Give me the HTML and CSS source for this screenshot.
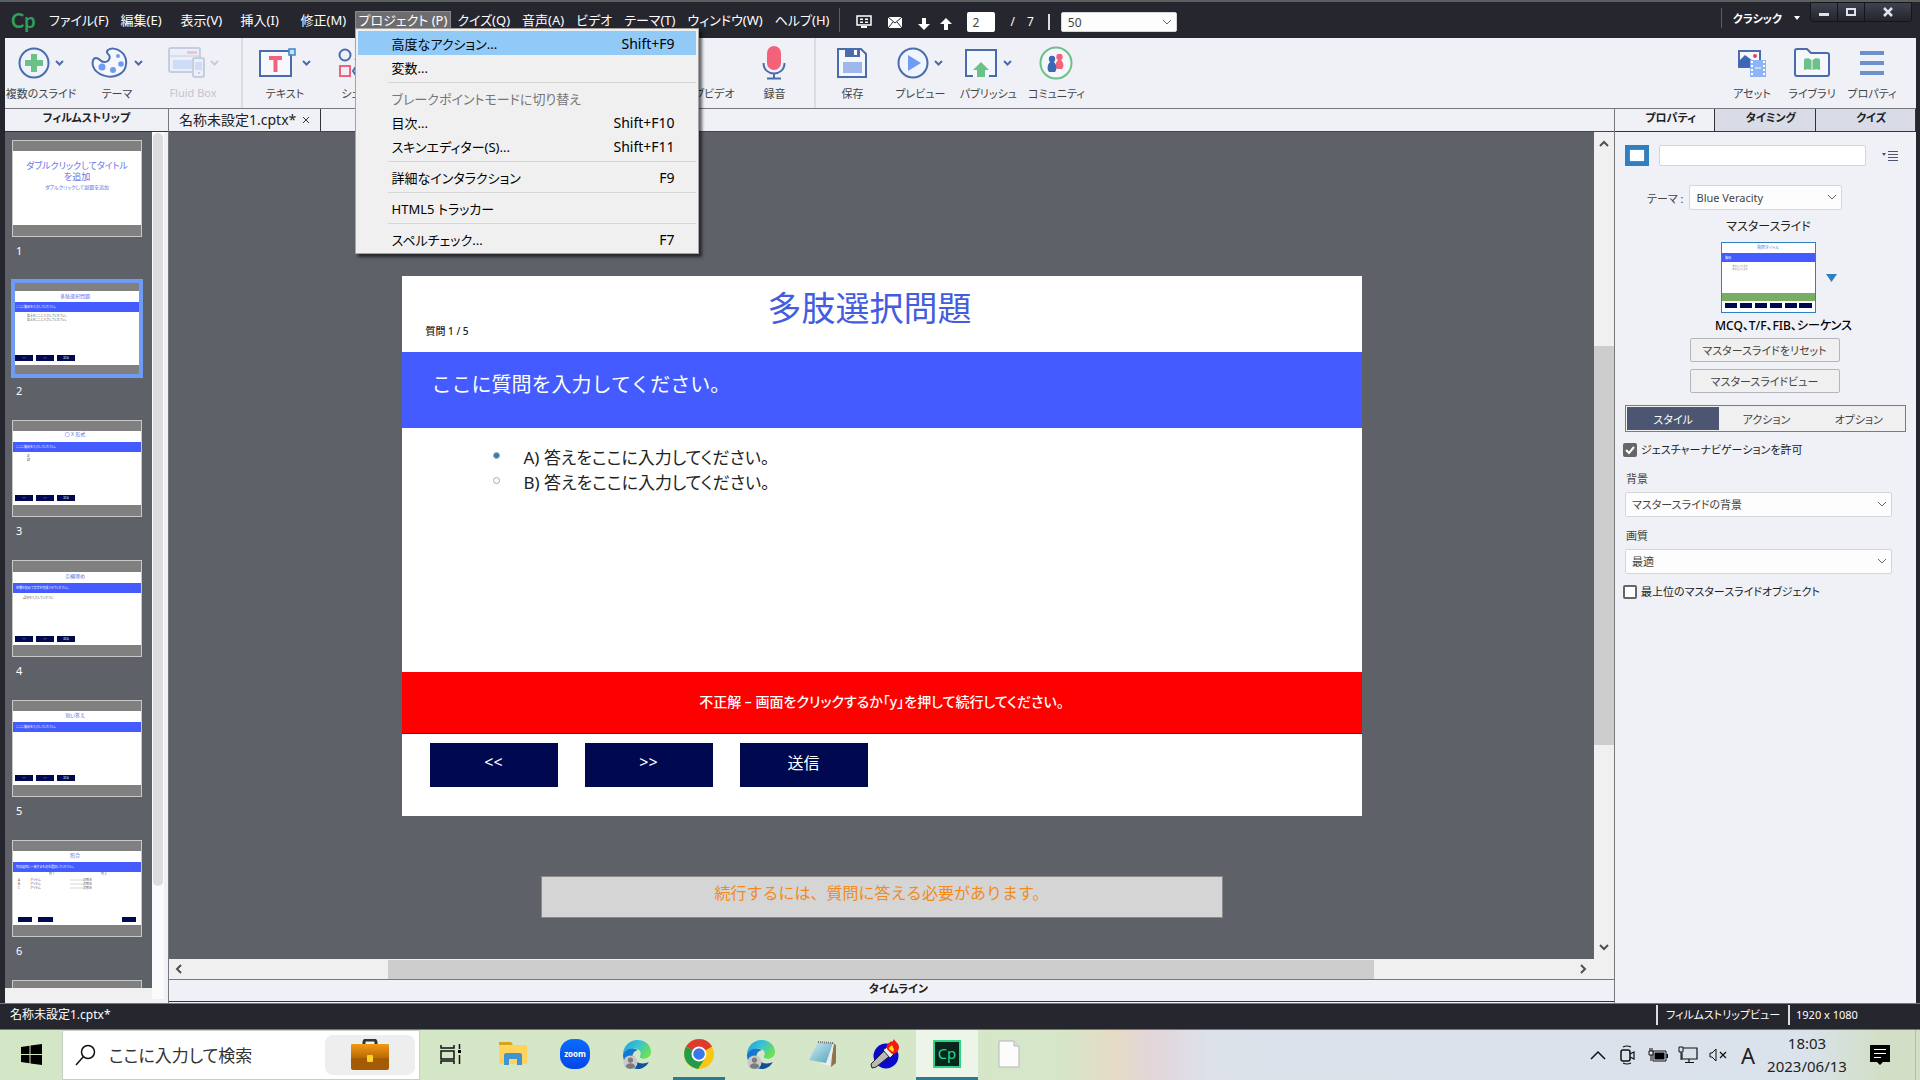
FILE: index.html
```html
<!DOCTYPE html>
<html lang="ja">
<head>
    <meta charset="UTF-8">
    <meta name="viewport" content="width=device-width, initial-scale=1.0">
    <title>名称未設定1.cptx</title>
    <link rel="stylesheet" href="styles.css">
</head>
<body>
    <!-- Shared icons -->
    <svg class="defs" width="0" height="0" aria-hidden="true">
        <defs>
            <linearGradient id="edgeTop" x1="0" y1="0" x2="1" y2="0.5">
                <stop offset="0" stop-color="#1b9de2"/>
                <stop offset="0.5" stop-color="#35c1d8"/>
                <stop offset="1" stop-color="#6be05a"/>
            </linearGradient>
            <linearGradient id="zoomBlue" x1="0" y1="0" x2="0" y2="1">
                <stop offset="0" stop-color="#0a6cff"/>
                <stop offset="1" stop-color="#0546e8"/>
            </linearGradient>
            <linearGradient id="caseTop" x1="0" y1="0" x2="0" y2="1">
                <stop offset="0" stop-color="#f29a12"/>
                <stop offset="1" stop-color="#b96a06"/>
            </linearGradient>
            <linearGradient id="noteBlue" x1="0" y1="0" x2="1" y2="1">
                <stop offset="0" stop-color="#d5eef4"/>
                <stop offset="1" stop-color="#4ea3bb"/>
            </linearGradient>
        </defs>
        <symbol id="chev" viewBox="0 0 9 6">
            <path d="M1 1l3.500 3.500L8 1" fill="none" stroke="currentColor" stroke-width="2"/>
        </symbol>
        <symbol id="edge" viewBox="0 0 32 32">
            <path d="M1 17C1 8 8 1 16.500 1 25 1 31 7 31 13.500c0 5-4 7.500-8 7.500-3 0-4-1-4-2 0-1 1-1.500 1-3.500C20 12 16.500 10 12.500 10 6 10 2 13.500 1 17z" fill="url(#edgeTop)"/>
            <path d="M1 17c1-4 5-7 10-7 3 0 5 1 6 2-4 0-6 4-6 8 0 6 5 11 10 11-2 .7-3 1-5 1C7.500 32 1 25 1 17z" fill="#1478d0"/>
            <path d="M13 18c-1 5 4 8 9 8 3 0 5-1 6.500-1.500C26.500 29 21.500 32 16.500 32 12 30 9.500 22 13 18z" fill="#11519c"/>
            <circle cx="9" cy="25" r="7.500" fill="#c9c9c9"/>
            <circle cx="9" cy="22.500" r="2.800" fill="#7c7c7c"/>
            <path d="M4 29.500c0-5 10-5 10 0-3 3-7 3-10 0z" fill="#7c7c7c"/>
        </symbol>
    </svg>

    <header class="titlebar">
        <span class="logo">Cp</span>
        <nav class="menubar">
            <button>ファイル(F)</button>
            <button>編集(E)</button>
            <button>表示(V)</button>
            <button>挿入(I)</button>
            <button>修正(M)</button>
            <div class="menu-holder">
                <button class="open" aria-expanded="true">プロジェクト (P)</button>
                <div class="menu">
                    <button class="menu-item highlighted"><span>高度なアクション...</span><kbd>Shift+F9</kbd></button>
                    <button class="menu-item"><span>変数...</span></button>
                    <hr>
                    <button class="menu-item" disabled><span>ブレークポイントモードに切り替え</span></button>
                    <button class="menu-item"><span>目次...</span><kbd>Shift+F10</kbd></button>
                    <button class="menu-item"><span>スキンエディター(S)...</span><kbd>Shift+F11</kbd></button>
                    <hr>
                    <button class="menu-item"><span>詳細なインタラクション</span><kbd>F9</kbd></button>
                    <hr>
                    <button class="menu-item"><span>HTML5 トラッカー</span></button>
                    <hr>
                    <button class="menu-item"><span>スペルチェック...</span><kbd>F7</kbd></button>
                </div>
            </div>
            <button>クイズ(Q)</button>
            <button>音声(A)</button>
            <button>ビデオ</button>
            <button>テーマ(T)</button>
            <button>ウィンドウ(W)</button>
            <button>ヘルプ(H)</button>
        </nav>
        <div class="quickbar">
            <button aria-label="画面">
                <svg width="16" height="16" viewBox="0 0 16 16"><path d="M1 2h14v9H1z" fill="none" stroke="#fff" stroke-width="1.500"/><path d="M4 4.500h3v1.500H4zm5 0h3v1.500H9zM4 7.500h3V9H4zm5 0h3V9H9zM5 12h6v2H5z" fill="#fff"/></svg>
            </button>
            <button aria-label="メール">
                <svg width="16" height="16" viewBox="0 0 16 16"><path d="M1 3h14v11H1z" fill="#fff"/><path d="M1 3l7 6 7-6M1 14l5-6M15 14l-5-6" fill="none" stroke="#26262f"/></svg>
            </button>
            <button class="arrow" aria-label="次へ">
                <svg width="12" height="14" viewBox="0 0 12 14"><path d="M4 1h4v6h4l-6 6-6-6h4z" fill="#fff"/></svg>
            </button>
            <button class="arrow" aria-label="前へ">
                <svg width="12" height="14" viewBox="0 0 12 14"><path d="M4 13h4V7h4L6 1 0 7h4z" fill="#fff"/></svg>
            </button>
            <input class="page-number" type="text" value="2" aria-label="スライド番号">
            <span class="page-total"><span>/</span><span>7</span></span>
            <select class="zoom-level" aria-label="ズーム"><option>50</option></select>
        </div>
        <div class="workspace-switch">
            <button class="workspace-name">クラシック<svg width="6" height="4" viewBox="0 0 6 4"><path d="M0 0h6L3 4z" fill="#fff"/></svg></button>
            <div class="window-buttons">
                <button aria-label="最小化"><svg width="12" height="12" viewBox="0 0 12 12"><path d="M1 7h10v3H1z" fill="#dfe3ea"/></svg></button>
                <button aria-label="最大化"><svg width="12" height="12" viewBox="0 0 12 12"><path d="M2 3h8v6H2z" fill="none" stroke="#dfe3ea" stroke-width="2"/></svg></button>
                <button class="close" aria-label="閉じる"><svg width="12" height="12" viewBox="0 0 12 12"><path d="M2 2l8 8M10 2l-8 8" stroke="#dfe3ea" stroke-width="2.500"/></svg></button>
            </div>
        </div>
    </header>

    <div class="toolbar">
        <div class="tool-group first">
            <button class="tool">
                <span class="tool-icon">
                    <svg width="32" height="32" viewBox="0 0 32 32"><circle cx="16" cy="16" r="14.500" fill="#eef3fb" stroke="#4a6cae" stroke-width="2"/><path d="M13 7h6v6h6v6h-6v6h-6v-6H7v-6h6z" fill="#6cc188"/></svg>
                    <svg class="chev"><use href="#chev"/></svg>
                </span>
                <span>複数のスライド</span>
            </button>
            <button class="tool">
                <span class="tool-icon">
                    <svg width="38" height="32" viewBox="0 0 38 32"><path d="M17 3c3-2 8-2 12 1 9 6 8 20-2 24-9 4-22 0-25-9-1-4 0-8 3-8 4 0 4 4 8 4 6 0 7-6 4-8-2-2-1-3 0-4z" fill="#f4f7fc" stroke="#4a6cae" stroke-width="2"/><circle cx="11" cy="20" r="3.500" fill="#6f9cf0"/><circle cx="22" cy="23" r="3" fill="#6f9cf0"/><circle cx="30" cy="17" r="2.800" fill="#6f9cf0"/><circle cx="27" cy="9" r="2" fill="#6f9cf0"/></svg>
                    <svg class="chev"><use href="#chev"/></svg>
                </span>
                <span>テーマ</span>
            </button>
            <button class="tool" disabled>
                <span class="tool-icon">
                    <svg width="37" height="32" viewBox="0 0 37 32"><rect x="1" y="1" width="31" height="24" rx="2" fill="#eceff7" stroke="#c5cddf" stroke-width="2"/><path d="M19 4h10v3H19z" fill="#f0c5cf"/><path d="M1 9h31" stroke="#c5cddf"/><path d="M5 13h19v9H5z" fill="#cfdcf6"/><rect x="25" y="11" width="11" height="19" rx="2" fill="#eceff7" stroke="#c5cddf" stroke-width="2"/><path d="M27 15h7v8h-7z" fill="#cfdcf6"/><path d="M30 26h2" stroke="#c5cddf" stroke-width="2"/></svg>
                    <svg class="chev"><use href="#chev"/></svg>
                </span>
                <span>Fluid Box</span>
            </button>
        </div>
        <div class="tool-group wide">
            <button class="tool">
                <span class="tool-icon">
                    <svg width="38" height="32" viewBox="0 0 38 32"><path d="M1 4h31v25H1z" fill="#f6f8fd" stroke="#4a6cae" stroke-width="2"/><path d="M10 9h13v4h-4.500v12h-4V13H10z" fill="#f4617a"/><path d="M30 2h6v6h-6z" fill="#bfe0f5" stroke="#3f83c8" stroke-width="1.500"/></svg>
                    <svg class="chev"><use href="#chev"/></svg>
                </span>
                <span>テキスト</span>
            </button>
            <button class="tool">
                <span class="tool-icon">
                    <svg width="32" height="32" viewBox="0 0 32 32"><circle cx="7" cy="8" r="5.500" fill="none" stroke="#4a6cae" stroke-width="2"/><path d="M2 19h10v10H2z" fill="none" stroke="#f4617a" stroke-width="2"/><path d="M23 2l7 11H16z" fill="#6cc188"/><path d="M19 18h8l4 6-4 6h-8l-4-6z" fill="none" stroke="#4a6cae" stroke-width="2"/></svg>
                    <svg class="chev"><use href="#chev"/></svg>
                </span>
                <span>シェイプ</span>
            </button>
        </div>
        <div class="tool-group">
            <button class="tool">
                <span class="tool-icon">
                    <svg width="38" height="32" viewBox="0 0 38 32"><path d="M1 2h30v27H1z" fill="none" stroke="#4a6cae" stroke-width="2"/><circle cx="15" cy="12" r="7" fill="#e8435c"/><path d="M4 24h18v2H4z" fill="#9fb7ea"/><path d="M24 12c2-1 3 0 3 2v5l8 2c2 1 1 8-1 12h-9c-2-3-5-7-6-10 2-1 3 1 5 2z" fill="#3d67b4"/></svg>
                </span>
                <span>インタラクティブビデオ</span>
            </button>
            <button class="tool">
                <span class="tool-icon">
                    <svg width="24" height="34" viewBox="0 0 24 34"><rect x="5" y="0" width="14" height="24" rx="7" fill="#f4617a"/><path d="M1.500 17c0 14 21 14 21 0M12 27v6M5 32.500h14" fill="none" stroke="#4a6cae" stroke-width="2"/></svg>
                </span>
                <span>録音</span>
            </button>
        </div>
        <div class="tool-group publish">
            <button class="tool">
                <span class="tool-icon">
                    <svg width="32" height="32" viewBox="0 0 32 32"><path d="M2 2h23l5 5v23H2z" fill="#f4f7fc" stroke="#4a6cae" stroke-width="2"/><path d="M9 2h15v8H9z" fill="#4a6cae"/><path d="M18 3h3v5h-3z" fill="#fff"/><path d="M7 15h19v11H7z" fill="#9fb7ea"/></svg>
                </span>
                <span>保存</span>
            </button>
            <button class="tool">
                <span class="tool-icon">
                    <svg width="32" height="32" viewBox="0 0 32 32"><circle cx="16" cy="16" r="14.500" fill="#f0f5fd" stroke="#4a6cae" stroke-width="2"/><path d="M11 8l13 8-13 8z" fill="#6f9cf0"/></svg>
                    <svg class="chev"><use href="#chev"/></svg>
                </span>
                <span>プレビュー</span>
            </button>
            <button class="tool">
                <span class="tool-icon">
                    <svg width="34" height="32" viewBox="0 0 34 32"><path d="M9 29H2V3h30v26h-7" fill="#f4f7fc" stroke="#4a6cae" stroke-width="2"/><path d="M17 15l8 8h-4v7h-8v-7H9z" fill="#6cc188"/></svg>
                    <svg class="chev"><use href="#chev"/></svg>
                </span>
                <span>パブリッシュ</span>
            </button>
            <button class="tool">
                <span class="tool-icon">
                    <svg width="34" height="34" viewBox="0 0 34 34"><circle cx="17" cy="17" r="15.500" fill="#f4f7fc" stroke="#6cc188" stroke-width="2"/><circle cx="20.500" cy="11" r="3.200" fill="#f4617a"/><path d="M19 14h3c3 3 3 7 1 9h-5c-2-3-2-6 1-9z" fill="#f4617a"/><circle cx="13" cy="13" r="3.200" fill="#3d67b4"/><path d="M11 16h4c3 3 3 8 1 10h-6c-2-2-2-7 1-10z" fill="#3d67b4"/></svg>
                </span>
                <span>コミュニティ</span>
            </button>
        </div>
        <div class="tool-group panels">
            <button class="tool">
                <span class="tool-icon">
                    <svg width="30" height="30" viewBox="0 0 30 30"><path d="M2 3h21v16H2z" fill="#f4f7fc" stroke="#4a6cae" stroke-width="2"/><path d="M2 19v-6l6-6 8 6v6z" fill="#3d67b4"/><circle cx="18" cy="8" r="2" fill="#e8435c"/><path d="M13 12h16v17H13z" fill="#8db4f7"/><path d="M15 13v16M27 13v16" stroke="#fff" stroke-width="2" stroke-dasharray="2 2"/><path d="M18 20h6" stroke="#fff"/></svg>
                </span>
                <span>アセット</span>
            </button>
            <button class="tool">
                <span class="tool-icon">
                    <svg width="36" height="30" viewBox="0 0 36 30"><path d="M1 3c0-1 1-2 2-2h10l4 4h16c1 0 2 1 2 2v19c0 1-1 2-2 2H3c-1 0-2-1-2-2z" fill="#f4f7fc" stroke="#4a6cae" stroke-width="2"/><path d="M10 11c3-1 5-1 7.500 1v10c-2.500-1-5-1-7.500 0zm16 0c-3-1-5-1-7.500 1v10c2.500-1 5-1 7.500 0z" fill="#6cc188"/></svg>
                </span>
                <span>ライブラリ</span>
            </button>
            <button class="tool">
                <span class="tool-icon">
                    <svg width="24" height="26" viewBox="0 0 24 26"><path d="M0 1h24v4H0zm0 10h24v4H0zm0 10h24v4H0z" fill="#6c8fcf"/></svg>
                </span>
                <span>プロパティ</span>
            </button>
        </div>
    </div>

    <main class="workspace">
        <aside class="filmstrip">
            <h2 class="panel-title">フィルムストリップ</h2>
            <div class="filmstrip-body">
                <div class="thumbs">
                    <button class="thumb">
                        <svg viewBox="0 0 128 95">
                            <rect width="128" height="95" fill="#808080"/><rect y="10" width="128" height="74" fill="#fff"/>
                            <g fill="#6576e6" text-anchor="middle"><text x="64" y="28" font-size="9">ダブルクリックしてタイトル</text><text x="64" y="39" font-size="9">を追加</text><text x="64" y="48" font-size="5">ダブルクリックして副題を追加</text></g>
                        </svg>
                        <span>1</span>
                    </button>
                    <button class="thumb selected">
                        <svg viewBox="2 2 124 91">
                            <rect width="128" height="95" fill="#808080"/><rect y="10" width="128" height="74" fill="#fff"/><rect y="21" width="128" height="10" fill="#445cff"/>
                            <text x="62" y="17" font-size="5" fill="#6576e6" text-anchor="middle">多肢選択問題</text>
                            <text x="3" y="27" font-size="3" fill="#fff">ここに質問を入力してください。</text>
                            <g font-size="3" fill="#555"><text x="14" y="36">答えをここに入力してください。</text><text x="14" y="40">答えをここに入力してください。</text></g>
                            <path d="M2 74h18v6H2zm21 0h18v6H23zm21 0h18v6H44z" fill="#000850"/>
                            <g font-size="3" fill="#ccd" text-anchor="middle"><text x="11" y="78">&lt;&lt;</text><text x="32" y="78">&gt;&gt;</text><text x="53" y="78">送信</text></g>
                        </svg>
                        <span>2</span>
                    </button>
                    <button class="thumb">
                        <svg viewBox="0 0 128 95">
                            <rect width="128" height="95" fill="#808080"/><rect y="10" width="128" height="74" fill="#fff"/><rect y="21" width="128" height="10" fill="#445cff"/>
                            <text x="62" y="15" font-size="5" fill="#6576e6" text-anchor="middle">〇 X 形式</text>
                            <text x="3" y="27" font-size="3" fill="#fff">ここに質問を入力してください。</text>
                            <g font-size="3" fill="#555"><text x="14" y="36">正</text><text x="14" y="40">誤</text></g>
                            <path d="M2 74h18v6H2zm21 0h18v6H23zm21 0h18v6H44z" fill="#000850"/>
                            <g font-size="3" fill="#ccd" text-anchor="middle"><text x="11" y="78">&lt;&lt;</text><text x="32" y="78">&gt;&gt;</text><text x="53" y="78">送信</text></g>
                        </svg>
                        <span>3</span>
                    </button>
                    <button class="thumb">
                        <svg viewBox="0 0 128 95">
                            <rect width="128" height="95" fill="#808080"/><rect y="11" width="128" height="73" fill="#fff"/><rect y="22" width="128" height="10" fill="#445cff"/>
                            <text x="62" y="17" font-size="5" fill="#6576e6" text-anchor="middle">空欄埋め</text>
                            <text x="3" y="28" font-size="3" fill="#fff">空欄を埋めて文章を完成させてください。</text>
                            <text x="10" y="38" font-size="3" fill="#555">語句を入力してください</text>
                            <path d="M2 75h18v6H2zm21 0h18v6H23zm21 0h18v6H44z" fill="#000850"/>
                            <g font-size="3" fill="#ccd" text-anchor="middle"><text x="11" y="79">&lt;&lt;</text><text x="32" y="79">&gt;&gt;</text><text x="53" y="79">送信</text></g>
                        </svg>
                        <span>4</span>
                    </button>
                    <button class="thumb">
                        <svg viewBox="0 0 128 95">
                            <rect width="128" height="95" fill="#808080"/><rect y="10" width="128" height="74" fill="#fff"/><rect y="21" width="128" height="10" fill="#445cff"/>
                            <text x="62" y="16" font-size="5" fill="#6576e6" text-anchor="middle">短い答え</text>
                            <text x="3" y="27" font-size="3" fill="#fff">ここに質問を入力してください。</text>
                            <path d="M2 74h18v6H2zm21 0h18v6H23zm21 0h18v6H44z" fill="#000850"/>
                            <g font-size="3" fill="#ccd" text-anchor="middle"><text x="11" y="78">&lt;&lt;</text><text x="32" y="78">&gt;&gt;</text><text x="53" y="78">送信</text></g>
                        </svg>
                        <span>5</span>
                    </button>
                    <button class="thumb">
                        <svg viewBox="0 0 128 95">
                            <rect width="128" height="95" fill="#808080"/><rect y="10" width="128" height="74" fill="#fff"/><rect y="21" width="128" height="10" fill="#445cff"/>
                            <text x="62" y="16" font-size="5" fill="#6576e6" text-anchor="middle">照合</text>
                            <text x="3" y="27" font-size="3" fill="#fff">列の項目に一致するものを選択してください。</text>
                            <g font-size="3" fill="#555"><text x="36" y="34">列 1</text><text x="88" y="34">列 2</text><text x="5" y="40">A</text><text x="5" y="44">B</text><text x="5" y="48">C</text><text x="17" y="40">アイテム</text><text x="17" y="44">アイテム</text><text x="17" y="48">アイテム</text><text x="70" y="40">の照合</text><text x="70" y="44">の照合</text><text x="70" y="48">の照合</text></g>
                            <path d="M57 39h13M57 43h13M57 47h13" stroke="#aaa" stroke-width="0.500"/>
                            <path d="M5 76h14v5H5zm20 0h15v5H25zm84 0h14v5h-14z" fill="#000850"/>
                        </svg>
                        <span>6</span>
                    </button>
                    <button class="thumb" aria-label="7">
                        <svg viewBox="0 0 128 95"><rect width="128" height="95" fill="#808080"/></svg>
                    </button>
                </div>
                <div class="strip-scroll"><div class="strip-scroll-thumb"></div></div>
            </div>
        </aside>

        <section class="stage-area">
            <div class="doc-tabs">
                <button class="doc-tab">名称未設定1.cptx* <svg width="8" height="8" viewBox="0 0 8 8"><path d="M1 1l6 6M7 1L1 7" stroke="#333"/></svg></button>
            </div>
            <div class="stage">
                <div class="canvas">
                    <article class="slide">
                        <div class="slide-head">
                            <h1>多肢選択問題</h1>
                            <p>質問 1 / 5</p>
                        </div>
                        <div class="question">ここに質問を入力してください。</div>
                        <div class="answers">
                            <label><input type="radio" name="answer" checked>A) 答えをここに入力してください。</label>
                            <label><input type="radio" name="answer">B) 答えをここに入力してください。</label>
                        </div>
                        <div class="feedback">不正解 – 画面をクリックするか「y」を押して続行してください。</div>
                        <div class="slide-buttons">
                            <button>&lt;&lt;</button>
                            <button>&gt;&gt;</button>
                            <button>送信</button>
                        </div>
                    </article>
                    <div class="caption">続行するには、質問に答える必要があります。</div>
                </div>
                <div class="vscroll">
                    <svg width="10" height="7" viewBox="0 0 10 7"><path d="M1 6l4-4 4 4" fill="none" stroke="#505050" stroke-width="2"/></svg>
                    <div class="vscroll-track"><div class="vscroll-thumb"></div></div>
                    <svg width="10" height="7" viewBox="0 0 10 7"><path d="M1 1l4 4 4-4" fill="none" stroke="#505050" stroke-width="2"/></svg>
                </div>
            </div>
            <div class="hscroll">
                <svg width="7" height="10" viewBox="0 0 7 10"><path d="M6 1L2 5l4 4" fill="none" stroke="#505050" stroke-width="2"/></svg>
                <div class="hscroll-track"><div class="hscroll-thumb"></div></div>
                <svg width="7" height="10" viewBox="0 0 7 10"><path d="M1 1l4 4-4 4" fill="none" stroke="#505050" stroke-width="2"/></svg>
            </div>
            <button class="timeline">タイムライン</button>
        </section>

        <aside class="properties">
            <div class="panel-tabs">
                <button class="active">プロパティ</button>
                <button>タイミング</button>
                <button>クイズ</button>
            </div>
            <div class="props-body">
                <div class="name-row">
                    <svg width="24" height="21" viewBox="0 0 24 21"><path d="M0 0h24v21H0z" fill="#2f7fc3"/><path d="M4.500 4.500h15v12h-15z" fill="#fff" stroke="#1b4f80" stroke-dasharray="1 1"/></svg>
                    <input type="text" aria-label="名前">
                    <button aria-label="オプション"><svg width="16" height="12" viewBox="0 0 16 12"><path d="M0 3h4L2 6zM6 1h10v1H6zm0 3h10v1H6zm0 3h10v1H6zm0 3h10v1H6z" fill="#4c5672"/></svg></button>
                </div>
                <div class="theme-row">
                    <label for="theme">テーマ :</label>
                    <select id="theme"><option>Blue Veracity</option></select>
                </div>
                <div class="master">
                    <h3>マスタースライド</h3>
                    <button class="master-thumb">
                        <svg width="93" height="69" viewBox="0 0 93 69">
                            <rect width="93" height="69" fill="#fff"/><rect y="10" width="93" height="9" fill="#445cff"/><rect y="50" width="93" height="8" fill="#78ad66"/>
                            <text x="46" y="6" font-size="4" fill="#6576e6" text-anchor="middle">質問タイトル</text>
                            <text x="3" y="16" font-size="3" fill="#fff">質問</text>
                            <g font-size="2" fill="#555"><text x="8" y="24">○ 答えをここに入力</text><text x="8" y="27">○ 答えをここに入力</text></g>
                            <path d="M3 60h12v5H3zm15 0h12v5H18zm15 0h12v5H33zm15 0h12v5H48zm15 0h12v5H63zm14 0h13v5H77z" fill="#000850"/>
                        </svg>
                        <svg width="11" height="8" viewBox="0 0 11 8"><path d="M0 0h11L5.500 8z" fill="#2f7fc3"/></svg>
                    </button>
                    <p>MCQ、T/F、FIB、シーケンス</p>
                    <button class="wide-button">マスタースライドをリセット</button>
                    <button class="wide-button">マスタースライドビュー</button>
                </div>
                <div class="style-tabs">
                    <button class="active">スタイル</button>
                    <button>アクション</button>
                    <button>オプション</button>
                </div>
                <label class="check"><input type="checkbox" checked>ジェスチャーナビゲーションを許可</label>
                <div class="field">
                    <label for="bg">背景</label>
                    <select id="bg"><option>マスタースライドの背景</option></select>
                </div>
                <div class="field">
                    <label for="quality">画質</label>
                    <select id="quality"><option>最適</option></select>
                </div>
                <label class="check"><input type="checkbox">最上位のマスタースライドオブジェクト</label>
            </div>
        </aside>
    </main>

    <footer class="statusbar">
        <span class="file">名称未設定1.cptx*</span>
        <span class="view">フィルムストリップビュー</span>
        <span class="size">1920 x 1080</span>
    </footer>

    <div class="taskbar">
        <button class="start" aria-label="スタート">
            <svg width="21" height="21" viewBox="0 0 21 21"><path d="M0 3l8.500-1.200V10H0zM9.500 1.600L21 0v10H9.500zM0 11h8.500v8.200L0 18zM9.500 11H21v10L9.500 19.400z"/></svg>
        </button>
        <div class="search">
            <svg width="21" height="22" viewBox="0 0 21 22"><circle cx="13" cy="8" r="6.500" fill="none" stroke="#111" stroke-width="1.500"/><path d="M8.500 12.500L1 21" stroke="#111" stroke-width="1.500"/></svg>
            <input type="text" placeholder="ここに入力して検索" aria-label="検索">
            <span class="search-badge">
                <svg width="38" height="32" viewBox="0 0 38 32"><path d="M13 6V3c0-1 1-2 2-2h8c1 0 2 1 2 2v3" fill="none" stroke="#333" stroke-width="3"/><rect y="5" width="38" height="26" rx="2" fill="#a35c05"/><path d="M0 7c0-1 1-2 2-2h34c1 0 2 1 2 2v12H0z" fill="url(#caseTop)"/><rect x="16" y="16" width="6" height="7" rx="1" fill="#ffd21f"/></svg>
            </span>
        </div>
        <button aria-label="タスクビュー"><svg width="22" height="22" viewBox="0 0 22 22"><path d="M1 2v3h13V2M1 8h13v8H1zM1 21v-3h13v3M19.500 1v5M19.500 12v9" fill="none" stroke="#111" stroke-width="1.500"/><path d="M18 7h3v3h-3z"/></svg></button>
        <button aria-label="エクスプローラー"><svg width="28" height="26" viewBox="0 0 28 26"><path d="M0 1h12l2 3H0z" fill="#d9a21b"/><path d="M0 4h27c1 0 1 1 1 1v18H0z" fill="#ffd35c"/><path d="M5 24V14c0-1 1-2 2-2h14c1 0 2 1 2 2v10h-5v-6h-8v6z" fill="#3f94d1"/></svg></button>
        <button aria-label="Zoom"><svg width="30" height="30" viewBox="0 0 30 30"><rect width="30" height="30" rx="13" fill="url(#zoomBlue)"/><text x="15" y="18" font-size="8" font-weight="700" fill="#fff" text-anchor="middle">zoom</text></svg></button>
        <button aria-label="Edge"><svg width="30" height="30"><use href="#edge"/></svg></button>
        <button class="running" aria-label="Chrome"><svg width="30" height="30" viewBox="0 0 30 30"><circle cx="15" cy="15" r="15" fill="#f9c614"/><path d="M15 15L2 7.500C5 3 9.500 0 15 0c6 0 10.500 3 13 7.500z" fill="#dd3b2d"/><path d="M2 7.500C-2 15 0 27 14 30l7.500-11.500L15 15z" fill="#249b48"/><circle cx="15" cy="15" r="7.500" fill="#fff"/><circle cx="15" cy="15" r="5.800" fill="#3a78e8"/></svg></button>
        <button aria-label="Edge 2"><svg width="30" height="30"><use href="#edge"/></svg></button>
        <button aria-label="メモ帳"><svg width="28" height="28" viewBox="0 0 28 28"><path d="M24 3l3 2v18l-5 4z" fill="#93734c"/><path d="M10 3l15 1-4 22-9-2z" fill="#e9edef"/><path d="M9 2l15 1-7 20L0 20z" fill="url(#noteBlue)"/><path d="M9 2l15 1" stroke="#777" stroke-width="2" stroke-dasharray="1 1"/></svg></button>
        <button aria-label="トーチ"><svg width="30" height="30" viewBox="0 0 30 30"><circle cx="16" cy="17" r="12.500" fill="#0a0acb"/><path d="M2 29l-1-4L15 11l6 5L6 28z" fill="#b9b9b9" stroke="#222"/><path d="M13 11l4-3 7 7-4 4z" fill="#eee" stroke="#222"/><path d="M17 10c-2-5 3-6 4-8 1 2 2 0 3-2 1 3 5 4 5 8 0 5-5 8-7 7z" fill="#f01c12"/><path d="M19 10c0-3 2-2 3-4 1 3 3 4 1 7z" fill="#ffe312"/></svg></button>
        <button class="current" aria-label="Captivate"><svg width="28" height="28" viewBox="0 0 28 28"><rect x="1" y="1" width="26" height="26" fill="#07261d" stroke="#2ad685" stroke-width="2"/><text x="14" y="19" font-size="15" fill="#2ad685" text-anchor="middle">Cp</text></svg></button>
        <button aria-label="ファイル"><svg width="22" height="28" viewBox="0 0 22 28"><path d="M1 1h15l5 5v21H1z" fill="#fcfcfd" stroke="#b5b5bb"/><path d="M16 1v5h5" fill="#e2e2e6" stroke="#b5b5bb"/></svg></button>
        <div class="tray">
            <button aria-label="隠れているアイコン"><svg width="16" height="10" viewBox="0 0 16 10"><path d="M1 9l7-7 7 7" fill="none" stroke="#111" stroke-width="1.500"/></svg></button>
            <button aria-label="カメラ"><svg width="16" height="20" viewBox="0 0 16 20"><rect x="1" y="5" width="9" height="11" rx="2" fill="none" stroke="#111" stroke-width="1.500"/><path d="M10 9l4-2v7l-4-2M3 2c3-1.500 5-1.500 8 0M3 18c3 1.500 5 1.500 8 0" fill="none" stroke="#111" stroke-width="1.200"/></svg></button>
            <button aria-label="バッテリー"><svg width="20" height="15" viewBox="0 0 20 15"><path d="M5 3h13v10H5z" fill="none" stroke="#111"/><path d="M6.500 4.500h10v7h-10zM18.500 6h1.500v4h-1.500z"/><path d="M1 3h4v4H1zM2 0v3M4 0v3M3 7v6" fill="#dce3ea" stroke="#111"/></svg></button>
            <button aria-label="ネットワーク"><svg width="20" height="18" viewBox="0 0 20 18"><path d="M5 2h14v11H4V7M11 13v3M7 16.500h9" fill="none" stroke="#111" stroke-width="1.200"/><path d="M1 1h4v5H1zM3 6v8" fill="none" stroke="#111"/></svg></button>
            <button aria-label="音量"><svg width="18" height="14" viewBox="0 0 18 14"><path d="M1 5h2l4-4v12L3 9H1z" fill="none" stroke="#111"/><path d="M11 4l6 6M17 4l-6 6" stroke="#111" stroke-width="1.200"/></svg></button>
            <button class="ime">A</button>
            <div class="clock"><span>18:03</span><span>2023/06/13</span></div>
            <button class="notify" aria-label="通知"><svg width="20" height="20" viewBox="0 0 20 20"><path d="M0 0h20v17h-7l-3 3-3-3H0z"/><path d="M4 4.500h12M4 8.500h12M4 12.500h7" stroke="#fff"/></svg></button>
        </div>
    </div>
</body>
</html>
```

FILE: styles.css
```css
* {
    box-sizing: border-box;
}

body {
    margin: 0;
    height: 100vh;
    display: flex;
    flex-direction: column;
    overflow: hidden;
    background: #26262f;
    font-family: "Noto Sans", "Noto Sans CJK JP", sans-serif;
    font-feature-settings: "palt";
    font-size: 11px;
    color: #222;
}

button,
input,
select {
    font: inherit;
    font-feature-settings: inherit;
    color: inherit;
    margin: 0;
}

button {
    background: none;
    border: none;
    padding: 0;
    white-space: nowrap;
}

svg {
    display: block;
    flex-shrink: 0;
}

h1, h2, h3, p {
    margin: 0;
}

.defs {
    position: absolute;
}

select {
    appearance: none;
    border: 1px solid #d5d6da;
    border-radius: 2px;
    padding: 0 24px 0 6px;
    color: #444;
    background: #fdfdfd url("data:image/svg+xml,%3Csvg xmlns='http://www.w3.org/2000/svg' width='8' height='5'%3E%3Cpath d='M0 0l4 4 4-4' fill='none' stroke='%23666'/%3E%3C/svg%3E") no-repeat right 5px center;
}

/* Title bar */
.titlebar {
    display: flex;
    align-items: center;
    height: 38px;
    flex-shrink: 0;
    padding: 0 8px 0 11px;
    border-top: 2px solid #5a605f;
    color: #fff;
}

.logo {
    width: 32px;
    font-family: Lato, sans-serif;
    font-size: 20px;
    font-weight: 700;
    color: #2e9e5b;
}

.menubar {
    display: flex;
    align-items: center;
    font-size: 13px;
}

.menubar > button,
.menu-holder > button {
    height: 18px;
    line-height: 18px;
    padding: 0 6px;
    text-align: left;
}

.menubar > button:nth-child(-n+5) {
    min-width: 60px;
}

.menu-holder {
    position: relative;
}

.menu-holder > .open {
    background: #6d6d6f;
    border: 1px solid #88888a;
    line-height: 16px;
    padding: 0 3px;
}

.menu {
    position: absolute;
    z-index: 10;
    top: 17px;
    left: 0;
    width: 344px;
    padding: 2px;
    background: #f0f0f0;
    border: 1px solid #a5a5a5;
    box-shadow: 3px 3px 3px rgba(0, 0, 0, 0.6);
    color: #000;
}

.menu-item {
    display: flex;
    justify-content: space-between;
    align-items: center;
    width: 100%;
    height: 24px;
    padding: 0 21px 0 34px;
}

.menu-item.highlighted {
    background: #91c9f7;
}

.menu-item:disabled {
    color: #777;
}

.menu-item kbd {
    font-family: inherit;
    font-size: 14px;
}

.menu hr {
    height: 1px;
    margin: 3px 0 3px 30px;
    border: none;
    background: #d5d5d5;
}

.quickbar {
    display: flex;
    align-items: center;
    gap: 15px;
    margin-left: 4px;
    padding: 4px 0 0 16px;
    border-left: 1px solid #5c5c63;
    font-size: 12px;
}

.quickbar .arrow {
    padding-top: 4px;
    margin-right: -5px;
}

.page-number {
    width: 28px;
    height: 20px;
    margin-left: 5px;
    padding: 0 5px;
    border: none;
    border-radius: 2px;
    color: #444;
}

.page-total {
    display: flex;
    gap: 12px;
    padding-right: 14px;
    border-right: 2px solid #ddd;
    line-height: 16px;
}

.zoom-level {
    width: 116px;
    height: 20px;
    margin-left: -4px;
}

.workspace-switch {
    display: flex;
    align-items: flex-start;
    align-self: stretch;
    margin-left: auto;
}

.workspace-name {
    display: flex;
    align-items: center;
    gap: 12px;
    height: 20px;
    margin: 6px 10px 0 0;
    padding-left: 11px;
    border-left: 1px solid #5c5c63;
    font-weight: 700;
}

.window-buttons {
    display: flex;
    border: 1px solid #15161b;
    border-radius: 0 0 3px 3px;
    background: linear-gradient(#3f434e, #23252d);
}

.window-buttons button {
    display: grid;
    place-items: center;
    width: 27px;
    height: 18px;
    border-right: 1px solid #15161b;
}

.window-buttons .close {
    width: 46px;
    border-right: none;
}

/* Toolbar */
.toolbar {
    display: flex;
    height: 71px;
    flex-shrink: 0;
    margin: 0 4px 0 5px;
    background: #f0f1f7;
    border-bottom: 1px solid #77787d;
}

.tool-group {
    display: flex;
    gap: 4px;
    padding: 8px 4px 0 4px;
}

.tool-group + .tool-group:not(.panels) {
    box-shadow: inset 2px 0 #dcdde2;
}

.tool-group.first {
    padding: 8px 12px 0 0;
}

.tool-group.wide {
    width: 383px;
    padding-left: 8px;
}

.tool-group.publish {
    gap: 0;
}

.tool-group.panels {
    gap: 0;
    margin-left: auto;
    padding-right: 14px;
}

.tool {
    display: flex;
    flex-direction: column;
    align-items: center;
    min-width: 72px;
    color: #444;
}

.publish .tool {
    min-width: 68px;
}

.panels .tool {
    min-width: 60px;
}

.tool:disabled {
    color: #c4c5cb;
}

.tool-icon {
    display: flex;
    align-items: center;
    gap: 5px;
    height: 34px;
    margin-bottom: 5px;
    color: #4a6cae;
}

.tool:disabled .tool-icon {
    color: #c5cddf;
}

.chev {
    width: 9px;
    height: 6px;
}

/* Workspace columns */
.workspace {
    display: grid;
    grid-template-columns: 164px 1fr 302px;
    flex: 1;
    min-height: 0;
    margin: 0 4px 0 5px;
    background: #f0f1f7;
}

.filmstrip,
.stage-area {
    display: flex;
    flex-direction: column;
    min-width: 0;
    min-height: 0;
}

.filmstrip {
    border-right: 1px solid #77787d;
}

.panel-title {
    height: 23px;
    flex-shrink: 0;
    border-bottom: 1px solid #33343a;
    font-size: 11px;
    line-height: 18px;
    text-align: center;
}

.filmstrip-body {
    display: flex;
    flex: 1;
    min-height: 0;
    padding-bottom: 4px;
}

.thumbs {
    display: flex;
    flex-direction: column;
    width: 147px;
    padding: 8px 7px 0;
    border-bottom: 11px solid #f0f0f0;
    background: #5f6169;
    overflow: hidden;
}

.thumb {
    display: flex;
    flex-direction: column;
    align-items: flex-start;
    flex-shrink: 0;
    width: 130px;
    height: 140px;
    color: #fff;
}

.thumb svg {
    width: 130px;
    height: 97px;
    border: 1px solid #c8c8c8;
}

.thumb.selected svg {
    border: 4px solid #6f9bf5;
    width: 132px;
    height: 99px;
    margin: -1px;
}

.thumb span {
    padding-left: 4px;
    line-height: 28px;
}

.strip-scroll {
    width: 12px;
    background: #fbfbfb;
    padding: 1px 0 0 1px;
}

.strip-scroll-thumb {
    height: 87%;
    width: 10px;
    border-radius: 5px;
    background: #dcdcdc;
}

/* Stage */
.doc-tabs {
    height: 23px;
    flex-shrink: 0;
    border-bottom: 1px solid #44454b;
}

.doc-tab {
    display: flex;
    align-items: center;
    justify-content: space-between;
    width: 152px;
    height: 22px;
    padding: 0 10px;
    border-right: 1px solid #33343a;
    font-size: 14px;
    line-height: 18px;
}

.stage {
    display: flex;
    flex: 1;
    min-height: 0;
    background: #5f6169;
}

.canvas {
    flex: 1;
    display: flex;
    flex-direction: column;
    align-items: center;
    padding-top: 144px;
    min-width: 0;
}

.slide {
    display: flex;
    flex-direction: column;
    width: 100%;
    max-width: 960px;
    aspect-ratio: 16 / 9;
    background: #fff;
}

.slide-head {
    height: 76px;
    padding: 8px 24px 0;
}

.slide-head h1 {
    font-size: 34px;
    font-weight: 400;
    line-height: 48px;
    text-align: center;
    padding-right: 24px;
    color: #445ce0;
}

.slide-head p {
    margin-top: -8px;
    font-size: 10px;
    font-weight: 500;
    line-height: 14px;
}

.question {
    height: 76px;
    padding: 0 30px;
    background: #445cff;
    color: #fff;
    font-feature-settings: normal;
    font-size: 20px;
    line-height: 66px;
}

.answers {
    flex: 1;
    display: flex;
    flex-direction: column;
    padding: 17px 91px;
    font-size: 17px;
    line-height: 25px;
}

.answers label {
    display: flex;
}

.answers input {
    appearance: none;
    width: 7px;
    height: 7px;
    margin: 7px 24px 0 0;
    border: 1px solid #aaa;
    border-radius: 50%;
    background: #fff;
}

.answers input:checked {
    background: #2f7fb4;
}

.feedback {
    height: 62px;
    border-bottom: 1px solid #701010;
    background: #f00;
    color: #fff;
    font-size: 14px;
    font-weight: 500;
    line-height: 60px;
    text-align: center;
}

.slide-buttons {
    display: flex;
    gap: 27px;
    height: 82px;
    padding: 9px 28px;
}

.slide-buttons button {
    width: 128px;
    height: 44px;
    padding-bottom: 6px;
    background: #000850;
    color: #fff;
    font-size: 16px;
}

.caption {
    width: 682px;
    max-width: 100%;
    margin-top: 60px;
    border: 1px solid #8a8a8a;
    background: #d5d5d5;
    color: #f28a1c;
    font-feature-settings: normal;
    font-size: 16px;
    line-height: 33px;
    padding-bottom: 7px;
    text-align: center;
}

.vscroll {
    display: flex;
    flex-direction: column;
    align-items: center;
    width: 20px;
    padding: 8px 0;
    background: #f0f0f0;
}

.vscroll-track {
    display: flex;
    flex-direction: column;
    justify-content: center;
    flex: 1;
    align-self: stretch;
}

.vscroll-thumb {
    height: 50%;
    background: #cdcdcd;
}

.hscroll {
    display: flex;
    align-items: center;
    height: 21px;
    padding: 0 27px 0 6px;
    background: #f0f0f0;
    border-bottom: 1px solid #77787d;
}

.hscroll-track {
    flex: 1;
    padding: 0 206px;
}

.hscroll-thumb {
    height: 19px;
    background: #cdcdcd;
}

.timeline {
    height: 22px;
    margin-bottom: 1px;
    border-bottom: 1px solid #33343a;
    font-weight: 700;
    line-height: 16px;
    padding: 0 0 4px 14px;
}

/* Properties */
.properties {
    border-left: 1px solid #77787d;
    min-width: 0;
}

.panel-tabs {
    display: flex;
    height: 23px;
}

.panel-tabs button {
    flex: 1;
    padding: 0 0 5px 12px;
    border-right: 1px solid #33343a;
    border-bottom: 1px solid #33343a;
    background: #d9dbe7;
    font-weight: 700;
    line-height: 16px;
}

.panel-tabs .active {
    background: none;
}

.props-body {
    padding: 13px 10px 0 8px;
}

.name-row {
    display: flex;
    align-items: center;
    gap: 10px;
    padding-left: 2px;
}

.name-row input {
    flex: 1;
    min-width: 0;
    height: 21px;
    border: 1px solid #d5d6da;
    border-radius: 2px;
    background: #fff;
}

.name-row button {
    padding: 0 8px 0 6px;
}

.theme-row {
    display: flex;
    align-items: center;
    gap: 6px;
    margin-top: 19px;
    padding-left: 24px;
    color: #444;
}

.theme-row select {
    width: 153px;
    height: 25px;
}

.master {
    display: flex;
    flex-direction: column;
    align-items: center;
    padding-top: 8px;
    margin-right: -12px;
}

.master h3 {
    font-size: 12px;
    font-weight: 400;
    line-height: 18px;
    padding-right: 4px;
}

.master-thumb {
    display: flex;
    align-items: center;
    gap: 10px;
    margin-top: 6px;
    padding-left: 16px;
}

.master-thumb svg:first-child {
    width: 95px;
    height: 71px;
    border: 1px solid #2f7fc3;
}

.master p {
    margin: 4px 0 3px;
    padding-left: 26px;
    font-size: 12px;
    font-weight: 500;
    color: #000;
    line-height: 18px;
}

.wide-button {
    width: 150px;
    height: 24px;
    margin-bottom: 7px;
    margin-right: 12px;
    border: 1px solid #b5b6bb;
    border-radius: 2px;
    background: #f0f0f0;
    color: #444;
}

.style-tabs {
    display: flex;
    height: 27px;
    margin: 5px 0 8px 2px;
    border: 1px solid #777a8c;
    background: #f0f0f0;
}

.style-tabs button {
    flex: 1;
    color: #444;
}

.style-tabs .active {
    margin: 1px;
    background: #4c5672;
    color: #fff;
}

.check {
    display: flex;
    align-items: center;
    gap: 4px;
    line-height: 20px;
}

.check input {
    appearance: none;
    width: 14px;
    height: 14px;
    border: 2px solid #666;
    border-radius: 2px;
    background: #fff;
}

.check input:checked {
    background: #666 url("data:image/svg+xml,%3Csvg xmlns='http://www.w3.org/2000/svg' width='10' height='10'%3E%3Cpath d='M1 5l3 3 5-6' fill='none' stroke='%23fff' stroke-width='2'/%3E%3C/svg%3E") no-repeat center;
}

.field {
    display: flex;
    flex-direction: column;
    gap: 4px;
    margin: 10px 14px 8px 2px;
    line-height: 18px;
    color: #444;
}

.field select {
    height: 25px;
}

.field label {
    padding-left: 1px;
}

/* Status bar */
.statusbar {
    display: flex;
    align-items: center;
    height: 27px;
    flex-shrink: 0;
    padding: 0 8px 4px 10px;
    border-top: 1px solid #77787d;
    border-bottom: 1px solid #77787d;
    color: #fff;
    line-height: 20px;
    white-space: nowrap;
}

.statusbar .file {
    flex: 1;
    font-size: 12px;
}

.statusbar .view,
.statusbar .size {
    border-left: 2px solid #ddd;
}

.statusbar .view {
    width: 132px;
    padding-left: 8px;
}

.statusbar .size {
    width: 124px;
    padding-left: 6px;
}

/* Taskbar */
.taskbar {
    display: flex;
    height: 50px;
    flex-shrink: 0;
    background: linear-gradient(90deg, #d3e6c5 0, #d5e7c8 55%, #e6dcc6 58%, #e3d6da 60%, #dce1ea 63%, #dae2eb 94%, #d2dfc6 98%);
}

.taskbar > button {
    display: grid;
    place-items: center;
    width: 62px;
    padding-bottom: 2px;
}

.taskbar .running {
    background: linear-gradient(#2b7a94, #2b7a94) no-repeat center bottom / 52px 3px;
}

.taskbar .current {
    background: #edf4e8;
    border-bottom: 3px solid #2b7a94;
    padding: 0;
}

.search {
    display: flex;
    align-items: center;
    gap: 13px;
    width: 358px;
    padding: 0 4px 0 12px;
    border: 1px solid #c8cdc5;
    background: #fff;
}

.search input {
    flex: 1;
    min-width: 0;
    border: none;
    outline: none;
    font-size: 17px;
    padding: 0;
}

.search input::placeholder {
    color: #333;
}

.search-badge {
    display: grid;
    place-items: center;
    width: 90px;
    height: 40px;
    border-radius: 8px;
    background: #eee;
}

.tray {
    display: flex;
    align-items: center;
    margin-left: auto;
    margin-right: 4px;
    border-right: 1px solid #b5bdb0;
}

.tray button {
    display: grid;
    place-items: center;
    width: 30px;
}

.tray .ime {
    font-size: 22px;
}

.clock {
    display: flex;
    flex-direction: column;
    align-items: center;
    width: 88px;
    font-size: 15px;
    line-height: 23px;
}

.tray .notify {
    width: 64px;
    padding-right: 6px;
}
```
